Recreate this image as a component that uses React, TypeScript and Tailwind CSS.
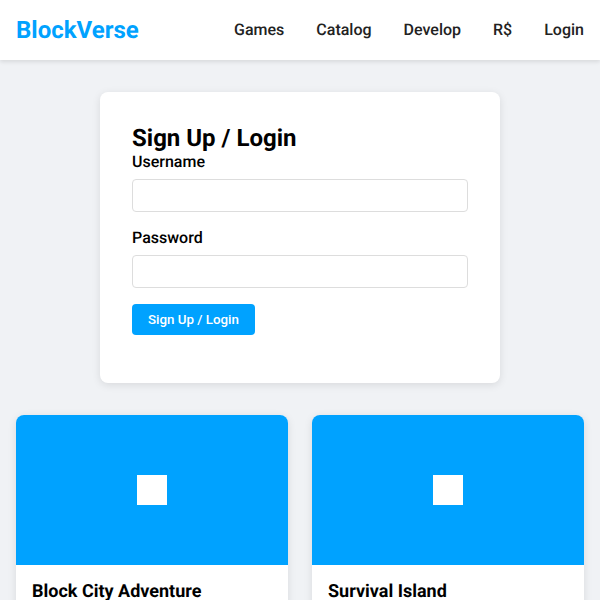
export default function App() {
  return (
    <div className="min-h-screen bg-[#f0f2f5] font-['Roboto',sans-serif] text-black antialiased [text-rendering:geometricPrecision]">
      <header className="flex h-[60px] items-center justify-between bg-white px-4 shadow-[0_2px_4px_rgba(0,0,0,0.1)]">
        <div className="text-2xl font-bold text-[#00a2ff]">BlockVerse</div>
        <nav className="flex gap-8 text-base font-medium text-[#222222]">
          <a>Games</a>
          <a>Catalog</a>
          <a>Develop</a>
          <a>R$</a>
          <a>Login</a>
        </nav>
      </header>
      <main className="p-4">
        <section className="mx-auto mt-4 mb-8 w-[400px] rounded-lg bg-white p-8 shadow-[0_2px_8px_rgba(0,0,0,0.1)]">
          <h2 className="text-2xl font-bold leading-7">Sign Up / Login</h2>
          <div className="mb-4">
            <label className="mb-2 block text-base font-medium leading-[19px]">Username</label>
            <input className="block h-[33px] w-full rounded border border-[#dddddd] bg-white" />
          </div>
          <div className="mb-4">
            <label className="mb-2 block text-base font-medium leading-[19px]">Password</label>
            <input className="block h-[33px] w-full rounded border border-[#dddddd] bg-white" />
          </div>
          <button className="mb-4 h-[31px] rounded bg-[#00a2ff] px-4 text-[13.333px] font-medium text-white">Sign Up / Login</button>
        </section>
        <div className="grid grid-cols-2 gap-6">
          {["Block City Adventure", "Survival Island"].map((t) => (
            <div key={t} className="overflow-hidden rounded-lg bg-white shadow-[0_2px_8px_rgba(0,0,0,0.1)]">
              <div className="flex h-[150px] items-center justify-center bg-[#00a2ff]">
                <div className="h-[30px] w-[30px] bg-white" />
              </div>
              <div className="p-4">
                <h3 className="text-lg font-bold leading-[21px]">{t}</h3>
              </div>
            </div>
          ))}
        </div>
      </main>
    </div>
  );
}
